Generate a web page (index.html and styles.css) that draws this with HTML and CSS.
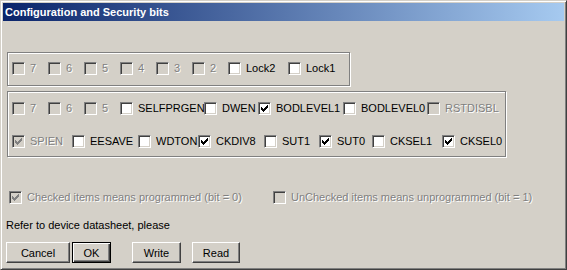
FILE: index.html
```html
<!DOCTYPE html>
<html>
<head>
<meta charset="utf-8">
<link rel="stylesheet" href="styles.css">
</head>
<body>
<div class="window">
  <div class="titlebar">Configuration and Security bits</div>
  <div class="client">
    <div class="group g1">
      <div class="row">
        <div class="item w36 dis"><span class="cb"></span><span class="lbl">7</span></div>
        <div class="item w36 dis"><span class="cb"></span><span class="lbl">6</span></div>
        <div class="item w36 dis"><span class="cb"></span><span class="lbl">5</span></div>
        <div class="item w36 dis"><span class="cb"></span><span class="lbl">4</span></div>
        <div class="item w36 dis"><span class="cb"></span><span class="lbl">3</span></div>
        <div class="item w36 dis"><span class="cb"></span><span class="lbl">2</span></div>
        <div class="item w60"><span class="cb"></span><span class="lbl">Lock2</span></div>
        <div class="item wauto"><span class="cb"></span><span class="lbl">Lock1</span></div>
      </div>
    </div>
    <div class="group g2">
      <div class="row">
        <div class="item w36 dis"><span class="cb"></span><span class="lbl">7</span></div>
        <div class="item w36 dis"><span class="cb"></span><span class="lbl">6</span></div>
        <div class="item w36 dis"><span class="cb"></span><span class="lbl">5</span></div>
        <div class="item w84"><span class="cb"></span><span class="lbl">SELFPRGEN</span></div>
        <div class="item w54"><span class="cb"></span><span class="lbl">DWEN</span></div>
        <div class="item w85"><span class="cb on"><svg viewBox="0 0 7 7" width="7" height="7"><path d="M0 2h1v3h-1zM1 3h1v3h-1zM2 4h1v3h-1zM3 3h1v3h-1zM4 2h1v3h-1zM5 1h1v3h-1zM6 0h1v3h-1z"/></svg></span><span class="lbl">BODLEVEL1</span></div>
        <div class="item w84"><span class="cb"></span><span class="lbl">BODLEVEL0</span></div>
        <div class="item wauto dis"><span class="cb"></span><span class="lbl">RSTDISBL</span></div>
      </div>
      <div class="row">
        <div class="item w60 dis"><span class="cb on"><svg viewBox="0 0 7 7" width="7" height="7"><path d="M0 2h1v3h-1zM1 3h1v3h-1zM2 4h1v3h-1zM3 3h1v3h-1zM4 2h1v3h-1zM5 1h1v3h-1zM6 0h1v3h-1z"/></svg></span><span class="lbl">SPIEN</span></div>
        <div class="item w66"><span class="cb"></span><span class="lbl">EESAVE</span></div>
        <div class="item w60"><span class="cb"></span><span class="lbl">WDTON</span></div>
        <div class="item w66"><span class="cb on"><svg viewBox="0 0 7 7" width="7" height="7"><path d="M0 2h1v3h-1zM1 3h1v3h-1zM2 4h1v3h-1zM3 3h1v3h-1zM4 2h1v3h-1zM5 1h1v3h-1zM6 0h1v3h-1z"/></svg></span><span class="lbl">CKDIV8</span></div>
        <div class="item w55"><span class="cb"></span><span class="lbl">SUT1</span></div>
        <div class="item w53"><span class="cb on"><svg viewBox="0 0 7 7" width="7" height="7"><path d="M0 2h1v3h-1zM1 3h1v3h-1zM2 4h1v3h-1zM3 3h1v3h-1zM4 2h1v3h-1zM5 1h1v3h-1zM6 0h1v3h-1z"/></svg></span><span class="lbl">SUT0</span></div>
        <div class="item w70"><span class="cb"></span><span class="lbl">CKSEL1</span></div>
        <div class="item wauto"><span class="cb on"><svg viewBox="0 0 7 7" width="7" height="7"><path d="M0 2h1v3h-1zM1 3h1v3h-1zM2 4h1v3h-1zM3 3h1v3h-1zM4 2h1v3h-1zM5 1h1v3h-1zM6 0h1v3h-1z"/></svg></span><span class="lbl">CKSEL0</span></div>
      </div>
    </div>
    <div class="legend">
      <div class="item w264 dis"><span class="cb on"><svg viewBox="0 0 7 7" width="7" height="7"><path d="M0 2h1v3h-1zM1 3h1v3h-1zM2 4h1v3h-1zM3 3h1v3h-1zM4 2h1v3h-1zM5 1h1v3h-1zM6 0h1v3h-1z"/></svg></span><span class="lbl">Checked items means programmed (bit = 0)</span></div>
      <div class="item wauto dis"><span class="cb"></span><span class="lbl">UnChecked items means unprogrammed (bit = 1)</span></div>
    </div>
    <div class="note">Refer to device datasheet, please</div>
    <div class="buttons">
      <button class="btn b-cancel">Cancel</button>
      <button class="btn b-ok default">OK</button>
      <button class="btn b-write">Write</button>
      <button class="btn b-read">Read</button>
    </div>
  </div>
</div>
</body>
</html>
```
FILE: styles.css
```css
* { box-sizing: border-box; }
html, body { margin: 0; padding: 0; background: #d4d0c8; }
body {
  font-family: "Liberation Sans", Arial, sans-serif;
  font-size: 11px;
  color: #000;
}
.window {
  width: 567px;
  height: 270px;
  border: 1px solid;
  border-color: #d4d0c8 #404040 #404040 #d4d0c8;
  box-shadow: inset 1px 1px #fff, inset -1px -1px #808080;
  padding: 2px;
  background: #d4d0c8;
  display: flex;
  flex-direction: column;
}
.titlebar {
  height: 18px;
  line-height: 18px;
  padding-left: 2px;
  color: #fff;
  font-weight: bold;
  font-size: 11px;
  background: linear-gradient(to right, #0a246a, #a6caf0);
  white-space: nowrap;
}
.client {
  padding: 31px 0 0 4px;
}
.group {
  border: 1px solid #808080;
  box-shadow: inset 1px 1px #fff, 1px 1px #fff;
  padding-left: 4px;
}
.g1 {
  width: 343px;
  height: 34px;
  padding-top: 9px;
}
.g2 {
  width: 499px;
  height: 66px;
  margin-top: 5px;
  padding-top: 10px;
  display: flex;
  flex-direction: column;
  gap: 20px;
}
.row {
  display: flex;
  height: 13px;
}
.item {
  display: flex;
  align-items: center;
  height: 13px;
  flex: none;
  overflow: hidden;
  white-space: nowrap;
}
.w36 { width: 36px; }
.w53 { width: 53px; }
.w54 { width: 54px; }
.w55 { width: 55px; }
.w60 { width: 60px; }
.w66 { width: 66px; }
.w70 { width: 70px; }
.w84 { width: 84px; }
.w85 { width: 85px; }
.w264 { width: 264px; }
.wauto { width: auto; overflow: visible; }
.cb {
  flex: none;
  width: 13px;
  height: 13px;
  border: 1px solid;
  border-color: #808080 #fff #fff #808080;
  box-shadow: inset 1px 1px #404040, inset -1px -1px #d4d0c8;
  background: #fff;
  margin-right: 5px;
  position: relative;
}
.cb svg {
  position: absolute;
  left: 2px;
  top: 2px;
  fill: #000;
  shape-rendering: crispEdges;
}
.lbl {
  line-height: 13px;
  padding-right: 2px;
}
.dis .cb { background: #d4d0c8; }
.dis .cb svg { fill: #808080; }
.dis .lbl { color: #808080; text-shadow: 1px 1px #fff; }
.legend {
  display: flex;
  margin-top: 34px;
  margin-left: 2px;
}
.note {
  margin-top: 15px;
  margin-left: -1px;
  line-height: 13px;
  height: 13px;
}
.buttons {
  display: flex;
  margin-top: 10px;
  margin-left: -1px;
}
.btn {
  font: inherit;
  color: #000;
  height: 21px;
  padding: 0;
  background: #d4d0c8;
  border: 1px solid;
  border-color: #fff #404040 #404040 #fff;
  box-shadow: inset -1px -1px #808080;
  border-radius: 0;
  outline: none;
}
.btn.default {
  border: 1px solid #000;
  box-shadow: inset 1px 1px #fff, inset -1px -1px #404040, inset -2px -2px #808080;
}
.b-cancel { width: 64px; }
.b-ok { width: 39px; margin-left: 2px; }
.b-write { width: 49px; margin-left: 21px; }
.b-read { width: 48px; margin-left: 11px; }
```
